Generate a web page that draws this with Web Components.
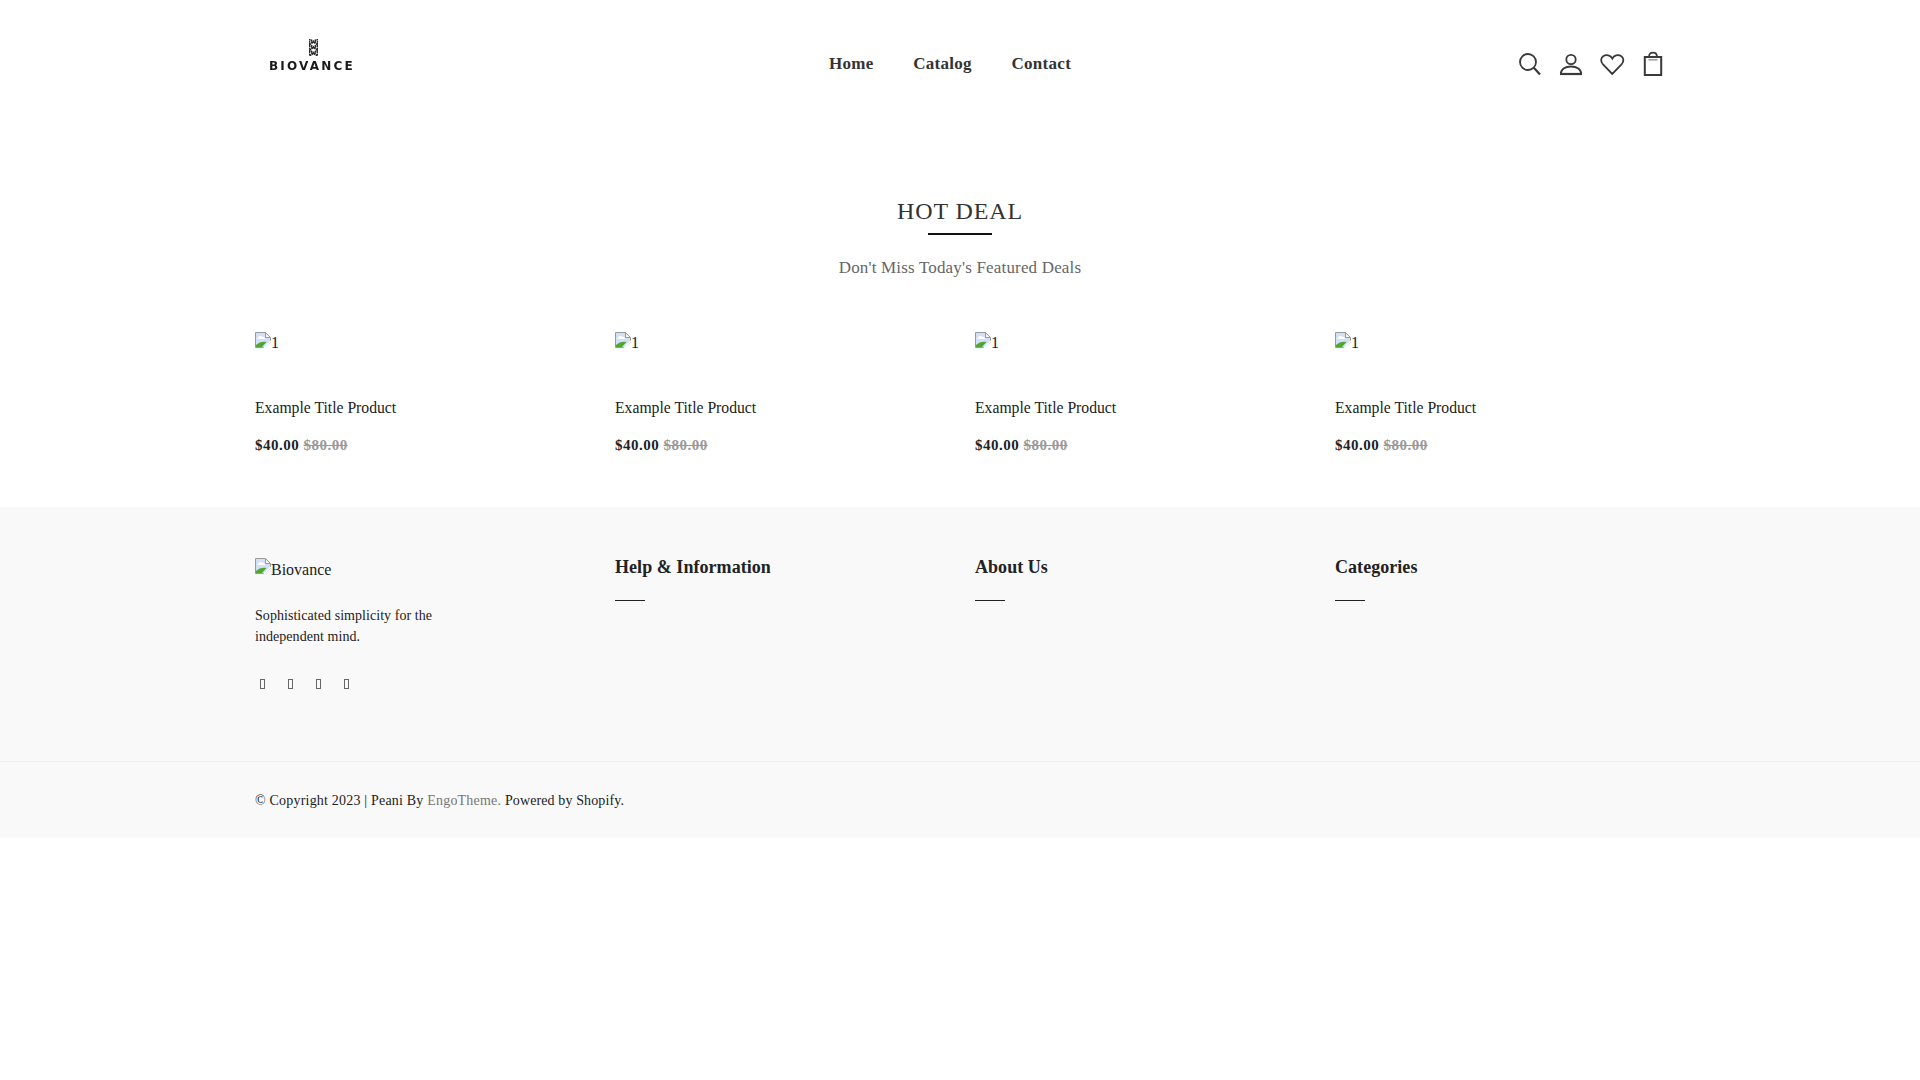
<!DOCTYPE html>
<html lang="en">
<head>
<meta charset="utf-8">
<title>Biovance</title>
<style>
  html, body { margin: 0; padding: 0; background: #fff; }
  body { font-family: "Liberation Serif", "Times New Roman", serif; color: #222; }
</style>
</head>
<body>
<site-header></site-header>
<deal-section></deal-section>
<site-footer></site-footer>

<script>
// stand-in for the browser's broken image icon
const brokenImg = `<svg class="broken" width="16" height="16" viewBox="0 0 16 16" style="flex:none;margin-top:-1px">
  <path d="M0.5 0.5H10.5L15.5 5.5V10L10 15.500H0.5Z" fill="#d3e0f7" stroke="#9a9a9a"/>
  <path d="M2.500 7c.5-2.500 2.500-3.500 4-2.500 1.500-.5 3.500 1 3.500 2.500H2.500Z" fill="#fff"/>
  <path d="M1 15V13C4 10 8 9 11.500 10L7 15Z" fill="#4fa82e"/>
  <path d="M10.500 .5V5.500H15.500L10.500 .5Z" fill="#f4f4f4" stroke="#9a9a9a"/>
  <path d="M9 16L16 9" stroke="#fff" stroke-width="1.500"/>
</svg>`;

class SiteHeader extends HTMLElement {
  connectedCallback() {
    this.attachShadow({ mode: 'open' });
    this.shadowRoot.innerHTML = `
      <style>
        :host { display: block; }
        header { width: 1410px; height: 127px; margin: 0 auto; display: flex; align-items: flex-start; }
        .logo { width: 574px; padding-top: 39px; box-sizing: border-box; }
        .logo .mark { display: block; width: 9px; height: 17px; margin-left: 54px; }
        .logo .word { display: block; margin: 4px 0 0 14px; font: bold 12px/12px "DejaVu Sans", sans-serif; letter-spacing: 2.2px; color: #1a1a1a; filter: blur(.2px); }
        nav { display: flex; gap: 39.5px; padding-top: 54px; font-size: 17px; line-height: 20px; font-weight: bold; letter-spacing: 0.3px; color: #333; }
        .icons { margin-left: auto; display: flex; gap: 17px; padding-top: 52px; }
        .icons svg { display: block; width: 24px; height: 24px; overflow: visible; fill: none; stroke: #3a3a3a; stroke-width: 1.8; }
      </style>
      <header>
        <div class="logo">
          <svg class="mark" viewBox="0 0 9 17">
            <path d="M0 0l9 5.500M9 0L0 5.500M0 5.500l9 5.500M9 5.500L0 11M0 11l9 6M9 11l-9 6M0 0V17M9 0V17" stroke="#2a2a2a" stroke-width="2.200" stroke-dasharray="1.600 .5"/>
          </svg>
          <span class="word">BIOVANCE</span>
        </div>
        <nav><span>Home</span><span>Catalog</span><span>Contact</span></nav>
        <div class="icons">
          <svg viewBox="0 0 24 24"><circle cx="10" cy="10" r="8"/><path d="M15.800 15.800L22 22.500" stroke-width="2.200"/></svg>
          <svg viewBox="0 0 24 24"><circle cx="12" cy="7.500" r="4.700"/><path d="M1.800 22C1.800 17.500 6 14.500 12 14.500S22.200 17.500 22.200 22"/><path d="M1 22H23" stroke-width="2.200"/></svg>
          <svg viewBox="0 0 24 24"><path d="M12.300 22L3 12.500C0 9 1 5.500 3.500 4 6.500 2.300 10.500 3.500 12.300 6.500 14 3.500 18 2.300 21 4 23.500 5.500 24.500 9 21.500 12.500Z"/></svg>
          <svg viewBox="0 0 24 24"><path d="M3.800 5H20.200V23H3.800Z" stroke-width="2"/><path d="M8 5C8 1.500 9.500 .7 12 .7S16 1.500 16 5"/><path d="M7.500 7.800H16.500" stroke="#999" stroke-width="1.500"/></svg>
        </div>
      </header>
    `;
  }
}

class ProductCard extends HTMLElement {
  connectedCallback() {
    this.attachShadow({ mode: 'open' });
    this.shadowRoot.innerHTML = `
      <style>
        :host { display: block; color: #222; }
        .pic { display: flex; align-items: flex-start; height: 20px; font-size: 16px; line-height: 20px; }
        .title { margin-top: 45px; font-size: 15.7px; line-height: 20px; }
        .price { margin-top: 17px; font-size: 15px; line-height: 20px; font-weight: bold; letter-spacing: 0.5px; }
        s { color: #999; }
      </style>
      <div class="pic">${brokenImg}<span>1</span></div>
      <div class="title"><slot name="title"></slot></div>
      <div class="price"><slot name="price"></slot> <s><slot name="old"></slot></s></div>
    `;
  }
}

class DealSection extends HTMLElement {
  connectedCallback() {
    this.attachShadow({ mode: 'open' });
    const cards = Array.from({ length: 4 }, () => `
      <product-card>
        <span slot="title">Example Title Product</span>
        <span slot="price">$40.00</span>
        <span slot="old">$80.00</span>
      </product-card>`).join('');
    this.shadowRoot.innerHTML = `
      <style>
        :host { display: block; height: 380px; }
        .head { text-align: center; padding-top: 70px; }
        h2 { margin: 0; font-size: 24px; line-height: 28px; font-weight: normal; letter-spacing: 0.9px; color: #333; }
        .bar { width: 64px; height: 2px; background: #111; margin: 8px auto 0; }
        p { margin: 22px 0 0; font-size: 17px; line-height: 21px; letter-spacing: 0.17px; color: #666; }
        .grid { width: 1410px; margin: 55px auto 0; display: grid; grid-template-columns: repeat(4, 360px); }
      </style>
      <div class="head">
        <h2>HOT DEAL</h2>
        <div class="bar"></div>
        <p>Don't Miss Today's Featured Deals</p>
      </div>
      <div class="grid">${cards}</div>
    `;
  }
}

class SiteFooter extends HTMLElement {
  connectedCallback() {
    this.attachShadow({ mode: 'open' });
    this.shadowRoot.innerHTML = `
      <style>
        :host { display: block; background: #f9f9f9; color: #222; }
        .top { height: 255px; box-sizing: border-box; border-bottom: 1px solid #f0f0f0; }
        .grid { width: 1410px; margin: 0 auto; padding-top: 49px; display: grid; grid-template-columns: repeat(4, 360px); }
        .brand { display: flex; align-items: flex-start; margin-top: 3px; font-size: 16px; line-height: 22px; }
        .blurb { margin: 24px 0 0; font-size: 14px; line-height: 21px; letter-spacing: 0.05px; width: 200px; }
        .social { display: flex; gap: 23px; margin-top: 32px; padding-left: 5px; }
        .social span { display: block; width: 5px; height: 10px; box-sizing: border-box; border: 1px solid #666; }
        h4 { margin: 0; font-size: 18px; line-height: 22px; font-weight: bold; letter-spacing: 0.05px; }
        h4::after { content: ""; display: block; width: 30px; height: 1px; background: #222; margin-top: 22px; }
        .bottom { height: 76px; width: 1410px; margin: 0 auto; padding-top: 1px; box-sizing: border-box; display: flex; align-items: center; font-size: 14px; letter-spacing: 0.2px; }
        .bottom a { color: #777; }
        .bottom i { font-style: normal; letter-spacing: 0.12px; }
      </style>
      <div class="top">
        <div class="grid">
          <div>
            <div class="brand">${brokenImg}<span>Biovance</span></div>
            <p class="blurb">Sophisticated simplicity for the independent mind.</p>
            <div class="social"><span></span><span></span><span></span><span></span></div>
          </div>
          <h4>Help &amp; Information</h4>
          <h4>About Us</h4>
          <h4>Categories</h4>
        </div>
      </div>
      <div class="bottom"><span>© Copyright 2023 | Peani By <a>EngoTheme.</a> <i>Powered by Shopify.</i></span></div>
    `;
  }
}

customElements.define('site-header', SiteHeader);
customElements.define('product-card', ProductCard);
customElements.define('deal-section', DealSection);
customElements.define('site-footer', SiteFooter);
</script>
</body>
</html>
